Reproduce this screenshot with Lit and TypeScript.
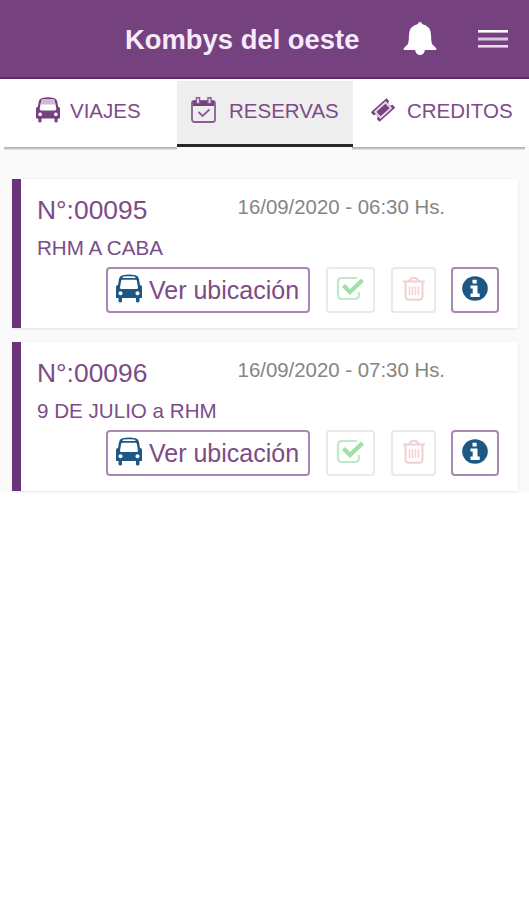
import { LitElement, html, css, svg } from "lit";
import { customElement, property } from "lit/decorators.js";

const bus = svg`<path fill-rule="evenodd" d="M3 5Q3.500 2 6.500 1.200Q13 -.4 19.500 1.200Q22.500 2 23 5L24 11Q26 11 26 13V24H23.500V27Q23.500 28.500 21.700 28.500T20 27V24H6V27Q6 28.500 4.300 28.500T2.500 27V24H0V13Q0 11 2 11ZM7.500 2.600Q6.500 3 6.500 3.900H19.500Q19.500 3 18.500 2.600Q13 1.800 7.500 2.600ZM6.500 5.700Q5.300 5.700 5.100 6.900L4 13.500Q3.800 15 5.500 15H20.500Q22.200 15 22 13.500L20.900 6.900Q20.700 5.700 19.500 5.700ZM4.500 17.300a2 2 0 1 0 .01 0ZM21.500 17.300a2 2 0 1 0 .01 0Z"/>`;

@customElement("trip-card")
class TripCard extends LitElement {
  @property() number = "";
  @property() route = "";
  @property() date = "";

  static styles = css`
    :host { display: block; }
    .card { box-sizing: border-box; height: 149px; background: #fff; border-left: 9px solid #6c3478; padding: 16px 19px 0 16px; box-shadow: 0 1px 3px rgba(0,0,0,.09); }
    .top { display: flex; justify-content: space-between; height: 37px; padding-right: 54px; }
    .num { font-size: 26.4px; line-height: 31px; color: #7d4c87; }
    .date { font-size: 20.4px; line-height: 24px; color: #858585; white-space: nowrap; }
    .route { font-size: 20.6px; line-height: 32px; height: 35px; color: #7d4c87; white-space: nowrap; }
    .actions { display: flex; justify-content: flex-end; }
    .btn { box-sizing: border-box; height: 46px; border: 2px solid #aa86b2; border-radius: 4px; display: flex; justify-content: center; background: #fff; }
    .where { width: 204px; justify-content: flex-start; padding-left: 8px; margin-right: 16px; font-size: 25px; line-height: 42px; color: #7d4c87; white-space: nowrap; }
    .where svg { margin: 5px 7px 0 0; fill: #1d5885; flex: none; }
    .ok { width: 49px; margin-right: 16px; border-color: #ebe7ec; }
    .del { width: 45px; margin-right: 15px; border-color: #ebe7ec; }
    .info { width: 48px; }
    .btn > svg { display: block; }
    .ok svg, .del svg, .info svg { margin-top: 7px; }
  `;

  render() {
    return html`<div class="card">
      <div class="top"><div class="num">N°:${this.number}</div><div class="date">${this.date}</div></div>
      <div class="route">${this.route}</div>
      <div class="actions">
        <div class="btn where"><svg width="26" height="29" viewBox="0 0 26 29">${bus}</svg><span>Ver ubicación</span></div>
        <div class="btn ok"><svg width="29" height="26" viewBox="0 0 29 26" fill="none"><path d="M21 2H6Q2 2 2 6V19Q2 23 6 23H19Q23 23 23 19V16" stroke="#bdebc3" stroke-width="2.200"/><path d="M7.500 9.500L14 16L26.500 4" stroke="#9fe0a8" stroke-width="4.400"/></svg></div>
        <div class="btn del"><svg width="24" height="27" viewBox="0 0 24 27" fill="none" stroke="#f4d0d2"><path d="M1 5.500H23M6 6L9.500 2H14L18 6M3.500 6V20Q3.500 23.800 7 23.800H17Q20.500 23.800 20.500 20V6" stroke-width="2"/><path d="M7.500 10.500V19M10.500 10.500V19M13.500 10.500V19M16.500 10.500V19" stroke-width="1.500"/></svg></div>
        <div class="btn info"><svg width="26" height="26" viewBox="0 0 26 26"><ellipse cx="13" cy="12.500" rx="12.800" ry="12.200" fill="#1d5885"/><path fill="#fff" d="M10.500 3.800H14.700V7.500H10.500ZM8.500 9.500H15.500V17.500H17.700V21H8.500V17.500H10.700V12.500H8.500Z"/></svg></div>
      </div>
    </div>`;
  }
}

@customElement("app-root")
class AppRoot extends LitElement {
  static styles = css`
    :host { display: block; height: 900px; background: #fff; font-family: "Liberation Sans", Arial, sans-serif; overflow: hidden; }
    .bar { box-sizing: border-box; height: 79px; background: #75417f; border-bottom: 2px solid #65256f; display: flex; align-items: center; padding: 0 21px 0 125px; color: #f6e9f9; }
    .title { font-size: 27.4px; font-weight: bold; width: 278px; white-space: nowrap; line-height: 32px; padding-top: 2px; }
    .bell { width: 34px; height: 35px; margin-right: auto; }
    .menu { width: 30px; height: 20px; }
    .tabs { display: grid; grid-template-columns: 177px 176px 176px; height: 68px; background: #fff; }
    .tab { box-sizing: border-box; display: flex; padding-top: 17px; font-size: 20.5px; line-height: 30px; color: #7d4c87; white-space: nowrap; }
    .trips { padding-left: 36px; }
    .booked { padding-left: 14px; background: #eee; border-bottom: 3px solid #2b242d; margin-top: 2px; padding-top: 15px; }
    .credits { padding-left: 17px; }
    .tab svg { flex: none; }
    .trips svg { margin: 1px 10px 0 0; fill: #75417f; }
    .booked svg { margin: 1px 12px 0 0; }
    .credits svg { margin: 1px 11px 0 0; }
    .rule { display: flex; justify-content: space-between; height: 3px; padding: 0 4px; background: #fafafa; }
    .line { width: 173px; height: 3px; background: linear-gradient(#aaa, #c3c3c3 50%, #eee); }
    .list { box-sizing: border-box; height: 342px; background: #fafafa; padding: 29px 11px 0 12px; display: flex; flex-direction: column; gap: 14px; }
  `;

  render() {
    return html`
      <div class="bar">
        <div class="title">Kombys del oeste</div>
        <svg class="bell" viewBox="0 0 34 35" fill="#fff"><path d="M15 3Q15 1 17 1T19 3Q28 5 28 14Q28 20 29 23L33 27Q34.500 29 32 29H22Q21 34 17 34T12 29H2Q-.5 29 1 27L5 23Q6 20 6 14Q6 5 15 3Z"/></svg>
        <svg class="menu" viewBox="0 0 30 20"><rect y="1" width="30" height="2.600" fill="#fff"/><rect y="8.500" width="30" height="3" fill="#dac7df"/><rect y="16" width="30" height="2.600" fill="#eadbee"/></svg>
      </div>
      <div class="tabs">
        <div class="tab trips"><svg width="24" height="26" viewBox="0 0 26 29" preserveAspectRatio="none">${bus}<path fill="#d3bad9" d="M6 2.300H20L21 8.500H5Z"/></svg>VIAJES</div>
        <div class="tab booked"><svg width="26" height="27" viewBox="0 0 26 27" fill="none" stroke="#8b5d94" stroke-width="1.800"><rect x="1" y="4" width="23" height="21" rx="2.500"/><path d="M2 4H23V9H2Z" fill="#75417f" stroke="none"/><path d="M7 0V7M18.500 0V7" stroke="#8b5d94" stroke-width="4.500"/><path d="M7 1.500V6M18.500 1.500V6" stroke="#e5d8e8" stroke-width="1.800"/><path d="M7.500 15L11.500 19L18.500 12.500"/></svg>RESERVAS</div>
        <div class="tab credits"><svg width="26" height="26" viewBox="0 0 26 26"><g transform="rotate(-42 13 13)"><path fill="#75417f" d="M2.500 6.500H23.500V10.500A2.500 2.500 0 0 0 23.500 15.500V19.500H2.500V15.500A2.500 2.500 0 0 0 2.500 10.500Z"/><rect x="6" y="9" width="14" height="8" fill="#75417f" stroke="#e6d8ea" stroke-width="1.900"/></g></svg>CREDITOS</div>
      </div>
      <div class="rule"><div class="line"></div><div class="line"></div></div>
      <div class="list">
        <trip-card number="00095" route="RHM A CABA" date="16/09/2020 - 06:30 Hs."></trip-card>
        <trip-card number="00096" route="9 DE JULIO a RHM" date="16/09/2020 - 07:30 Hs."></trip-card>
      </div>`;
  }
}
